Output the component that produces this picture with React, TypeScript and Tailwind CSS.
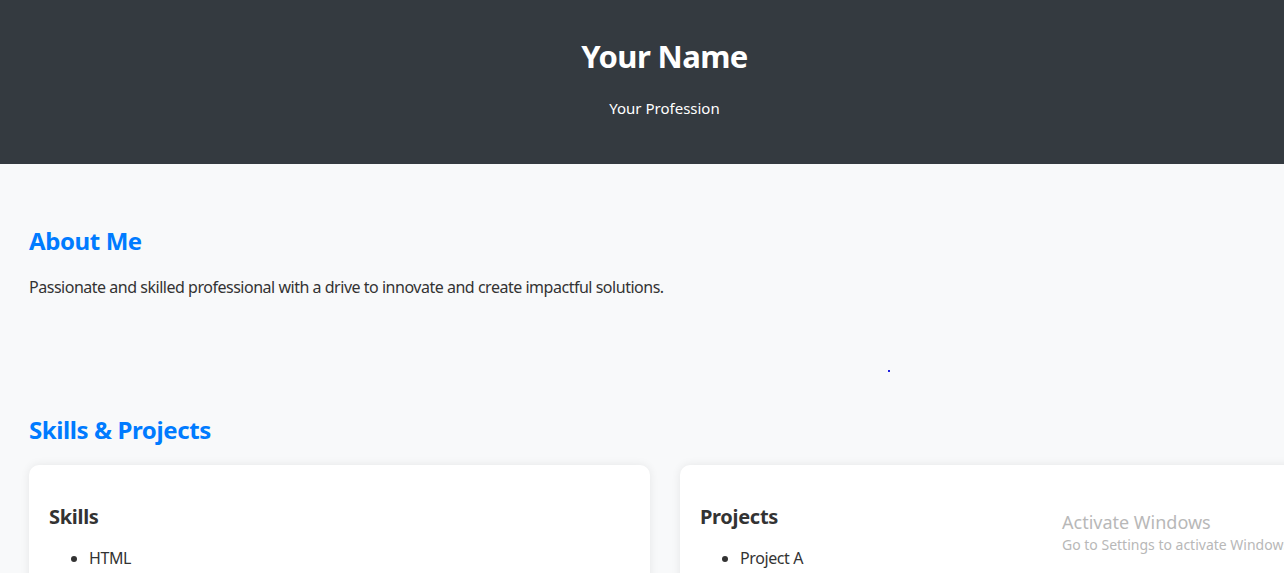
export default function App() {
  return (
    <div className="relative h-[573px] w-[1284px] overflow-hidden bg-[#f8f9fa] font-['Noto_Sans',sans-serif] text-[#333]">
      {/* Header */}
      <header className="flex h-[164px] w-[1329px] flex-col items-center bg-[#343a40] pt-[37px] text-white">
        <h1 className="text-[31px] font-bold leading-[38px] tracking-[-0.6px]">Your Name</h1>
        <p className="mt-[21px] text-[15px] leading-[24px]">Your Profession</p>
      </header>

      <main className="px-[29px]">
        {/* About */}
        <section className="pt-[61px]">
          <h2 className="text-[24px] font-bold leading-[32px] tracking-[-0.4px] text-[#007bff]">About Me</h2>
          <p className="mt-[18px] text-[16px] leading-[24px] tracking-[-0.48px]">
            Passionate and skilled professional with a drive to innovate and create impactful solutions.
          </p>
        </section>

        <div className="ml-[859px] mt-[71px] h-[2px] w-[2px] bg-[#2020e0]" />

        {/* Skills & Projects */}
        <section className="mt-[42px]">
          <h2 className="text-[24px] font-bold leading-[32px] tracking-[-0.4px] text-[#007bff]">Skills &amp; Projects</h2>
          <div className="mt-[19px] grid grid-cols-[621px_621px] gap-[30px]">
            <div className="rounded-[10px] bg-white px-5 pt-[38px] pb-5 shadow-[0_0_10px_rgba(0,0,0,0.08)]">
              <h3 className="text-[20px] font-bold leading-[28px] tracking-[-0.3px]">Skills</h3>
              <ul className="mt-[15px] list-disc pl-10 text-[16px] leading-[24px] tracking-[-0.4px]">
                <li>HTML</li>
                <li>CSS</li>
                <li>JavaScript</li>
              </ul>
            </div>
            <div className="rounded-[10px] bg-white px-5 pt-[38px] pb-5 shadow-[0_0_10px_rgba(0,0,0,0.08)]">
              <h3 className="text-[20px] font-bold leading-[28px] tracking-[-0.3px]">Projects</h3>
              <ul className="mt-[15px] list-disc pl-10 text-[16px] leading-[24px] tracking-[-0.4px]">
                <li>Project A</li>
                <li>Project B</li>
                <li>Project C</li>
              </ul>
            </div>
          </div>
        </section>
      </main>

      {/* Windows activation watermark */}
      <div className="pointer-events-none absolute left-[1062px] top-[510px] whitespace-nowrap text-[#b8b8b8]">
        <div className="text-[18px] leading-[24px]">Activate Windows</div>
        <div className="text-[14px] leading-[22px]">Go to Settings to activate Windows.</div>
      </div>
    </div>
  )
}
